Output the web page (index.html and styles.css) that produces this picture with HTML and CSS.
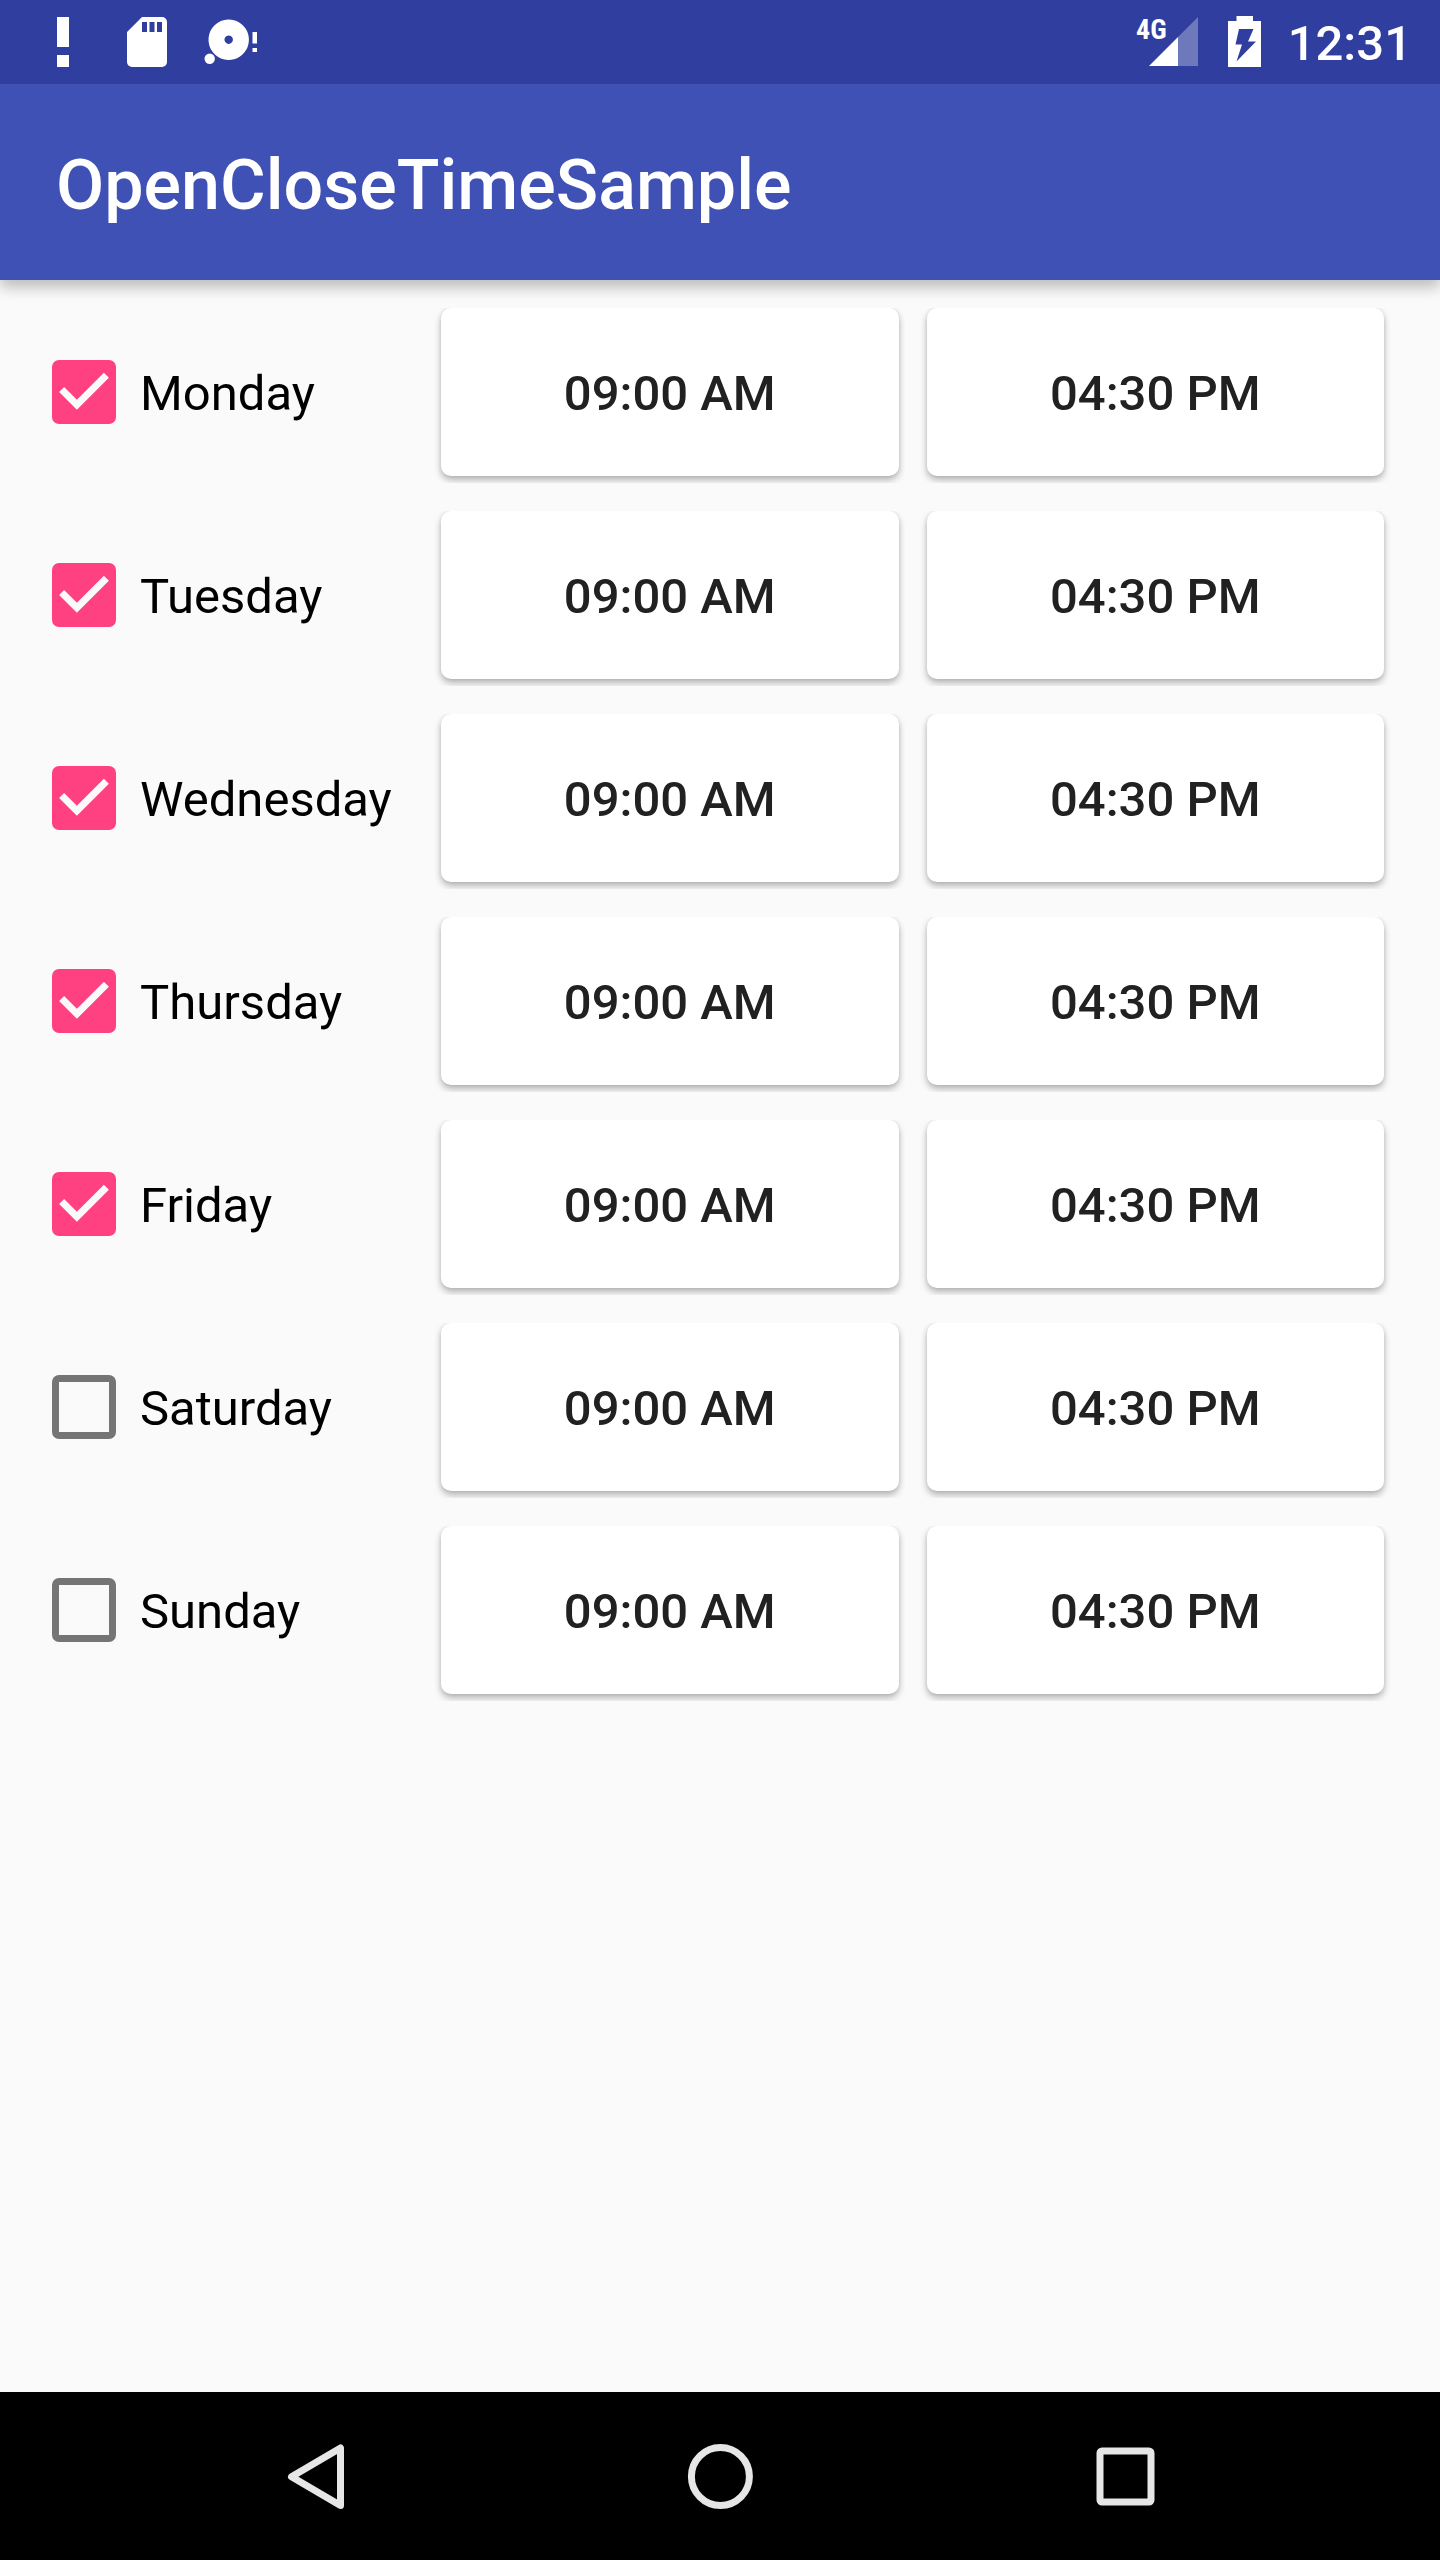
FILE: index.html
```html
<!DOCTYPE html>
<html lang="en">
<head>
<meta charset="utf-8">
<meta name="viewport" content="width=device-width, initial-scale=1">
<title>OpenCloseTimeSample</title>
<link rel="stylesheet" href="styles.css">
</head>
<body>
<div class="status-bar">
  <div class="notifications">
    <svg class="status-icon" viewBox="0 0 84 84" aria-hidden="true"><path d="M36 17h12v30H36zM36 55h12v12H36z"/></svg>
    <svg class="status-icon" viewBox="0 0 84 84" aria-hidden="true"><path fill-rule="evenodd" d="M37 17h20a5 5 0 0 1 5 5v40a5 5 0 0 1-5 5H27a5 5 0 0 1-5-5V32zM37 22v10h5V22zM44.500 22v10h5V22zM52 22v10h5V22z"/></svg>
    <svg class="status-icon" viewBox="0 0 84 84" aria-hidden="true"><path fill-rule="evenodd" d="M39.700 19.500a20.200 20.200 0 1 0 .01 0zM39.700 35.500a4.200 4.200 0 1 1-.01 0z"/><circle cx="20.700" cy="58.700" r="5.200"/><path d="M63.500 32H68v11.500h-4.500zM63.500 48H68v4h-4.500z"/></svg>
  </div>
  <div class="system">
    <svg class="signal" viewBox="0 0 64 84" aria-label="Mobile signal"><path d="M13 66 42 37v29z"/><path class="signal-off" d="M42 37 62 17v49H42z"/><text class="network" x="0" y="39">4G</text></svg>
    <svg class="battery" viewBox="0 0 34 84" aria-label="Battery charging"><path fill-rule="evenodd" d="M8.500 16h16.500v5h8v46H0V21h8.500zM11 29 7.500 44.500H14L8.500 61.500 28 41.500H20L25.500 29z"/></svg>
    <time class="clock">12:31</time>
  </div>
</div>
<header class="app-bar"><h1 class="app-title">OpenCloseTimeSample</h1></header>
<main class="schedule">
  <div class="day-row"><label class="day"><input class="tick" type="checkbox" checked><span class="day-name">Monday</span></label><button class="time">09:00 AM</button><button class="time">04:30 PM</button></div>
  <div class="day-row"><label class="day"><input class="tick" type="checkbox" checked><span class="day-name">Tuesday</span></label><button class="time">09:00 AM</button><button class="time">04:30 PM</button></div>
  <div class="day-row"><label class="day"><input class="tick" type="checkbox" checked><span class="day-name">Wednesday</span></label><button class="time">09:00 AM</button><button class="time">04:30 PM</button></div>
  <div class="day-row"><label class="day"><input class="tick" type="checkbox" checked><span class="day-name">Thursday</span></label><button class="time">09:00 AM</button><button class="time">04:30 PM</button></div>
  <div class="day-row"><label class="day"><input class="tick" type="checkbox" checked><span class="day-name">Friday</span></label><button class="time">09:00 AM</button><button class="time">04:30 PM</button></div>
  <div class="day-row"><label class="day"><input class="tick" type="checkbox"><span class="day-name">Saturday</span></label><button class="time">09:00 AM</button><button class="time">04:30 PM</button></div>
  <div class="day-row"><label class="day"><input class="tick" type="checkbox"><span class="day-name">Sunday</span></label><button class="time">09:00 AM</button><button class="time">04:30 PM</button></div>
</main>
<nav class="nav-bar">
  <button class="nav-button" aria-label="Back"><svg class="nav-icon" viewBox="0 0 84 84"><path d="M67.500 14v57.500L18.500 42.700z"/></svg></button>
  <button class="nav-button" aria-label="Home"><svg class="nav-icon" viewBox="0 0 84 84"><circle cx="42.400" cy="42.500" r="29"/></svg></button>
  <button class="nav-button" aria-label="Recent apps"><svg class="nav-icon" viewBox="0 0 84 84"><rect x="17" y="17" width="51" height="51" rx="2"/></svg></button>
</nav>
</body>
</html>
```
FILE: styles.css
```css
* {
  box-sizing: border-box;
}

body {
  display: flex;
  flex-direction: column;
  min-height: 100vh;
  margin: 0;
  background: #fafafa;
  color: #000;
  font-family: Roboto, sans-serif;
  font-size: 49px;
  line-height: 56px;
}

button {
  margin: 0;
  border: 0;
  font: inherit;
}

.status-bar {
  display: flex;
  justify-content: space-between;
  height: 84px;
  padding: 0 28px 0 21px;
  background: #303f9f;
  color: #fff;
}

.notifications,
.system {
  display: flex;
  align-items: center;
}

.status-icon,
.signal,
.battery {
  height: 84px;
  fill: #fff;
}

.status-icon {
  width: 84px;
}

.signal {
  width: 64px;
  margin-right: 28px;
}

.signal-off {
  fill-opacity: 0.3;
}

.network {
  font-family: "Roboto Condensed", "Liberation Sans Narrow", Roboto, sans-serif;
  font-size: 28px;
  font-weight: 700;
}

.battery {
  width: 34px;
  margin-right: 26px;
}

.clock {
  padding-top: 4px;
  font-weight: 500;
}

.app-bar {
  display: flex;
  align-items: center;
  height: 196px;
  padding: 6px 56px 0;
  background: #3f51b5;
  color: #fff;
  box-shadow: 0 7px 14px rgba(0, 0, 0, 0.26);
  clip-path: inset(0 0 -28px);
}

.app-title {
  margin: 0;
  font-size: 70px;
  font-weight: 500;
  line-height: 84px;
}

.schedule {
  display: flex;
  flex: 1;
  flex-direction: column;
  gap: 35px;
  padding: 28px 56px 28px 28px;
}

.day-row {
  display: grid;
  grid-template-columns: 385px 1fr 1fr;
  gap: 28px;
  min-height: 168px;
}

.day {
  display: flex;
  align-items: center;
}

.day-name {
  padding-top: 4px;
}

.tick {
  flex: none;
  width: 64px;
  height: 64px;
  margin: 0 24px;
  appearance: none;
  border: 7px solid #757575;
  border-radius: 7px;
}

.tick:checked {
  border: 0;
  background: #ff4081;
}

.tick:checked::after {
  display: block;
  height: 100%;
  background: #fafafa;
  clip-path: polygon(38.9% 77.8%, 11.1% 50%, 18.9% 42.2%, 38.9% 62.1%, 81.1% 19.9%, 88.9% 27.8%);
  content: "";
}

.time {
  padding: 4px 14px 0;
  border-radius: 10px;
  background: #fff;
  color: #212121;
  font-weight: 500;
  box-shadow: 0 4px 7px rgba(0, 0, 0, 0.28), 0 0 4px rgba(0, 0, 0, 0.08);
  clip-path: inset(0 -7px -7px);
}

.nav-bar {
  display: grid;
  grid-template-columns: repeat(3, 1fr);
  height: 168px;
  padding: 0 112px;
  background: #000;
}

.nav-button {
  display: flex;
  align-items: center;
  justify-content: center;
  padding: 0;
  background: none;
}

.nav-icon {
  width: 84px;
  height: 84px;
  fill: none;
  stroke: #e6e6e6;
  stroke-linejoin: round;
  stroke-width: 7px;
}
```
